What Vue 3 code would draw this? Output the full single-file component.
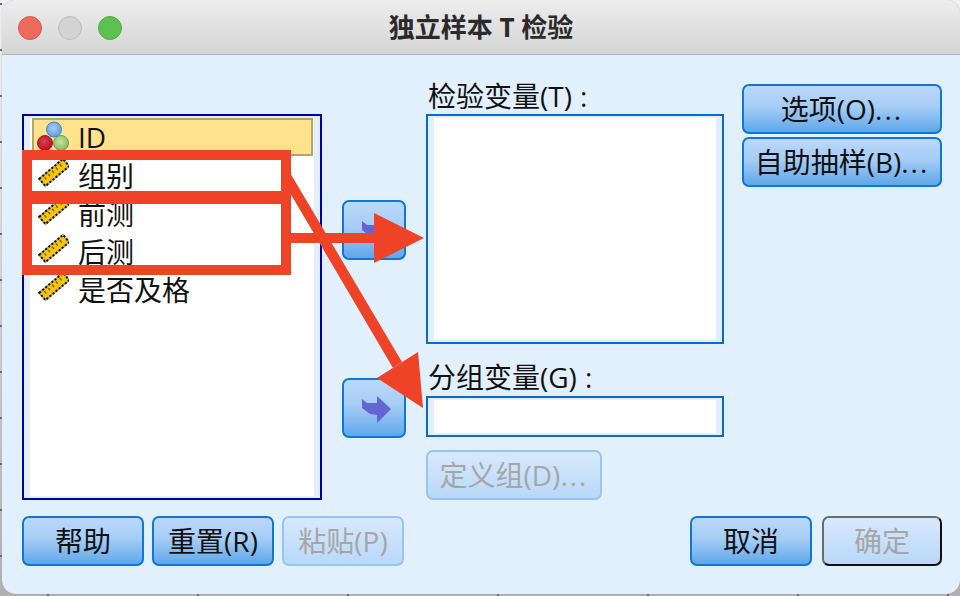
<template>
  <div class="desktop">
    <div class="window">
      <header class="titlebar">
        <div class="lights">
          <span class="light light--red"></span>
          <span class="light light--grey"></span>
          <span class="light light--green"></span>
        </div>
        <h1 class="title">独立样本 T 检验</h1>
      </header>

      <div class="dialog">
        <div class="main">
          <div class="source">
            <div class="list-inner">
              <div
                v-for="(item, i) in variables"
                :key="item"
                class="row"
                :class="{ 'row--active': i === 0 }"
              >
                <svg v-if="i === 0" class="row-icon" viewBox="0 0 36 38">
                  <defs>
                    <radialGradient id="ballBlue" cx="0.45" cy="0.4" r="0.6">
                      <stop offset="0" stop-color="#a9cdf5" />
                      <stop offset="1" stop-color="#5f9be0" />
                    </radialGradient>
                    <radialGradient id="ballRed" cx="0.45" cy="0.4" r="0.6">
                      <stop offset="0" stop-color="#e0404f" />
                      <stop offset="1" stop-color="#b01226" />
                    </radialGradient>
                    <radialGradient id="ballGreen" cx="0.45" cy="0.4" r="0.6">
                      <stop offset="0" stop-color="#c4e3a4" />
                      <stop offset="1" stop-color="#86b868" />
                    </radialGradient>
                  </defs>
                  <circle cx="21" cy="11.5" r="7.5" fill="url(#ballBlue)" stroke="#3f83d0" />
                  <circle cx="28" cy="25" r="7.5" fill="url(#ballGreen)" stroke="#6c9c50" />
                  <circle cx="12" cy="25" r="7.5" fill="url(#ballRed)" stroke="#a81b2c" />
                </svg>
                <svg v-else class="row-icon" viewBox="0 0 36 38">
                  <g transform="translate(3 -1) rotate(-40 18 18)">
                    <rect x="3" y="13" width="31" height="9.5" fill="#f8c606" stroke="#b9a766" stroke-width="2" />
                    <rect x="3" y="13" width="31" height="9.5" fill="none" stroke="#111" stroke-width="2" stroke-dasharray="2 2" />
                    <path d="M8 15v3M13 15v3M18 15v3M23 15v3M28 15v3" stroke="#7a6812" stroke-width="1.5" />
                  </g>
                </svg>
                <span class="row-label">{{ item }}</span>
              </div>
            </div>
          </div>

          <div class="movers">
            <button class="btn btn--move">
              <svg viewBox="0 0 60 56" class="move-arrow">
                <path d="M18 19l5 4h10v-7l14 13-14 14v-8l-7-1-8-6z" fill="#6464d2" />
              </svg>
            </button>
            <button class="btn btn--move">
              <svg viewBox="0 0 60 56" class="move-arrow">
                <path d="M18 19l5 4h10v-7l14 13-14 14v-8l-7-1-8-6z" fill="#6464d2" />
              </svg>
            </button>
          </div>

          <div class="targets">
            <label class="field-label">检验变量(T)<span class="colon">:</span></label>
            <div class="box box--tall"><div class="box-inner"></div></div>
            <label class="field-label field-label--second">分组变量(G)<span class="colon">:</span></label>
            <div class="box box--short"><div class="box-inner"></div></div>
            <button class="btn btn--off btn--define">定义组(D)<span class="dots">...</span></button>
          </div>

          <div class="side">
            <button class="btn">选项(O)<span class="dots">...</span></button>
            <button class="btn">自助抽样(B)<span class="dots">...</span></button>
          </div>
        </div>

        <footer class="actions">
          <div class="actions-group">
            <button class="btn btn--foot">帮助</button>
            <button class="btn btn--foot">重置(R)</button>
            <button class="btn btn--foot btn--off">粘贴(P)</button>
          </div>
          <div class="actions-group actions-group--right">
            <button class="btn btn--foot">取消</button>
            <button class="btn btn--foot btn--off btn--default">确定</button>
          </div>
        </footer>
      </div>
    </div>

    <!-- red annotation drawn over the dialog -->
    <svg class="markup" viewBox="0 0 960 596">
      <g fill="none" stroke="#ee4326" stroke-width="10">
        <rect x="27" y="155" width="259" height="41" />
        <rect x="27" y="199" width="259" height="71" />
      </g>
      <g fill="#ee4326">
        <rect x="286" y="233" width="90" height="10" />
        <polygon points="374,213 424,238 374,263" />
        <polygon points="286,166 402,362 393,368 286,186" />
        <polygon points="423,408 418,352 377,378" />
      </g>
    </svg>
  </div>
</template>

<script setup>
const variables = ["ID", "组别", "前测", "后测", "是否及格"];
</script>

<style>
html,
body {
  margin: 0;
  background: #f4f4f4;
}
</style>

<style scoped>
.desktop {
  position: relative;
  width: 960px;
  height: 596px;
  overflow: hidden;
  box-sizing: border-box;
  padding: 0 0 2px 2px;
  background-color: #c4c4c4;
  background-image: linear-gradient(#5e6b78 2px, transparent 2px),
    linear-gradient(90deg, #5e6b78 2px, transparent 2px),
    linear-gradient(#f0f0f0, #b0b0b0);
  background-size: 2px 46px, 150px 2px, 100% 100%;
  background-position: 0 3px, 47px 100%, 0 0;
  background-repeat: repeat-y, repeat-x, no-repeat;
  font-family: "Open Sans", "Noto Sans CJK SC", sans-serif;
  color: #111;
}

.window {
  height: 594px;
  border-radius: 14px;
  overflow: hidden;
  background: #e2effc;
  box-shadow: 0 0 1px #8f8f8f;
}

.titlebar {
  position: relative;
  box-sizing: border-box;
  height: 55px;
  padding-bottom: 2px;
  display: flex;
  align-items: center;
  justify-content: center;
  background: linear-gradient(#ededed, #d5d5d5);
  border-bottom: 1px solid #b2b2b2;
}

.lights {
  position: absolute;
  left: 16px;
  top: 16px;
  display: flex;
  gap: 16px;
}

.light {
  box-sizing: border-box;
  width: 24px;
  height: 24px;
  border-radius: 50%;
  border: 1px solid;
}

.light--red {
  background: #ee6a5f;
  border-color: #d9584e;
}

.light--grey {
  background: #d3d3d3;
  border-color: #bcbcbc;
}

.light--green {
  background: #5cc14f;
  border-color: #4fae43;
}

.title {
  margin: 0;
  font-size: 26px;
  font-weight: 700;
  color: #2a2a2a;
}

.dialog {
  padding: 27px 18px 0 20px;
}

.main {
  display: flex;
  height: 418px;
}

.source {
  box-sizing: border-box;
  width: 300px;
  height: 386px;
  margin-top: 32px;
  padding: 2px 6px;
  border: 2px solid #0000a8;
}

.list-inner {
  height: 100%;
  background: #fff;
}

.row {
  box-sizing: border-box;
  height: 38px;
  margin: 0 1px 0 2px;
  display: flex;
  align-items: center;
  font-size: 28px;
  border: 2px solid transparent;
}

.row--active {
  background: #fee38c;
  border-color: #b5a666;
}

.row--active .row-label {
  padding-top: 0;
}

.row-icon {
  width: 36px;
  height: 38px;
  flex: none;
  margin-left: -1px;
}

.row-label {
  margin-left: 9px;
  padding-top: 2px;
  line-height: 34px;
}

.movers {
  width: 64px;
  margin: 118px 20px 0;
  display: flex;
  flex-direction: column;
  gap: 118px;
}

.targets {
  width: 298px;
  display: flex;
  flex-direction: column;
  align-items: flex-start;
}

.field-label {
  height: 32px;
  margin-left: 2px;
  font-size: 28px;
  line-height: 28px;
  white-space: nowrap;
}

.field-label--second {
  margin-top: 18px;
  height: 34px;
  line-height: 30px;
}

.colon {
  margin-left: 8px;
}

.dots {
  letter-spacing: 2px;
}

.box {
  box-sizing: border-box;
  width: 298px;
  padding: 2px 6px;
  border: 2px solid #0a6cc8;
  flex: none;
}

.box--tall {
  height: 230px;
}

.box--short {
  height: 41px;
}

.box-inner {
  height: 100%;
  background: #fff;
}

.side {
  width: 200px;
  margin: 2px 0 0 18px;
  display: flex;
  flex-direction: column;
  gap: 3px;
}

.btn {
  box-sizing: border-box;
  width: 200px;
  height: 50px;
  padding: 0;
  border: 2px solid #0e78d9;
  border-radius: 7px;
  background: linear-gradient(#bbd8fb, #a6cdf6 45%, #5fa7ea);
  font: inherit;
  font-size: 28px;
  line-height: 1;
  color: #111;
  white-space: nowrap;
  display: flex;
  align-items: center;
  justify-content: center;
}

.btn--move {
  width: 64px;
  height: 60px;
}

.move-arrow {
  width: 60px;
  height: 56px;
}

.btn--off {
  border-color: #95c5f1;
  background: linear-gradient(#d8e9fd, #b8d8f8);
  color: #a6a6a6;
}

.btn--define {
  width: 176px;
  margin-top: 13px;
}

.actions {
  margin-top: 16px;
  display: flex;
  justify-content: space-between;
}

.actions-group {
  display: flex;
  gap: 8px;
}

.actions-group--right {
  gap: 10px;
}

.btn--foot {
  width: 122px;
}

.btn--default {
  width: 120px;
  border-color: #6b6b6b #111 #111 #6b6b6b;
}

.markup {
  position: absolute;
  left: 0;
  top: 0;
  width: 960px;
  height: 596px;
  pointer-events: none;
}
</style>
